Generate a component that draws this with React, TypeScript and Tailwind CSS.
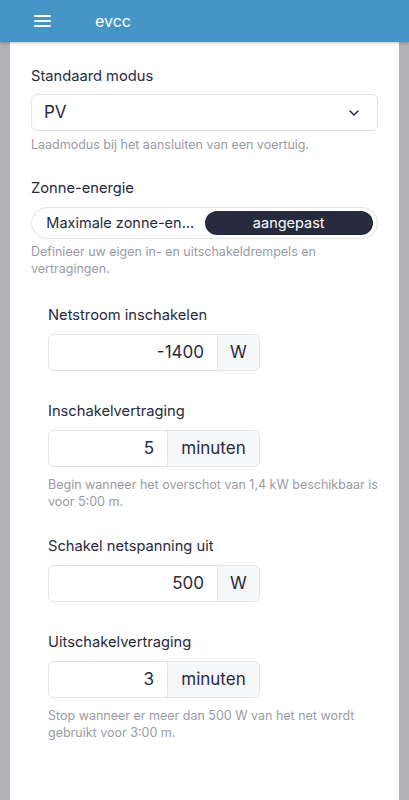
import { ChevronDown } from "lucide-react"

const font = { fontFamily: "Inter, 'Noto Sans', sans-serif" }

function Label({ children, className }: { children: React.ReactNode; className?: string }) {
  return <div className={"text-[14.7px] leading-5 text-[#28293e] " + (className ?? "")}>{children}</div>
}

function Help({ children, className }: { children: React.ReactNode; className?: string }) {
  return <p className={"text-[12.5px] leading-[17px] text-[#9a9ba3] " + (className ?? "")}>{children}</p>
}

function UnitInput({ value, unit, wide }: { value: string; unit: string; wide?: boolean }) {
  return (
    <div className="mt-[9px] flex h-[37px] w-[212px] rounded-md border border-[#e3e4e8] text-[17px] text-[#28293e]">
      <div className={wide ? "flex w-[168px] items-center justify-end pr-[13px]" : "flex w-[118px] items-center justify-end pr-[13px]"}>
        {value}
      </div>
      <div className="flex flex-1 items-center justify-center rounded-r-md border-l border-[#e3e4e8] bg-[#f6f7f9]">
        {unit}
      </div>
    </div>
  )
}

export default function App() {
  return (
    <div className="min-h-[800px] bg-[#b1b1b6]" style={font}>
      <header className="relative z-10 flex h-[42px] items-center bg-[#4596c7] shadow-[0_1px_3px_rgba(0,0,0,0.25)]">
        <svg className="ml-[34px]" width="17" height="12" viewBox="0 0 17 12">
          <rect x="0" y="0" width="17" height="2" rx="1" fill="white" />
          <rect x="0" y="5" width="17" height="2" rx="1" fill="white" />
          <rect x="0" y="10" width="17" height="2" rx="1" fill="white" />
        </svg>
        <span className="ml-[44px] text-[16px] text-white">evcc</span>
      </header>

      <main className="mx-[10px] min-h-[758px] bg-white px-[21px] pt-[24px] pb-10">
        <Label>Standaard modus</Label>
        <div className="mt-[8px] flex h-[37px] items-center justify-between rounded-md border border-[#e3e4e8] pl-[12px] pr-[15px] text-[17px] text-[#28293e]">
          <span>PV</span>
          <ChevronDown className="h-4 w-4" strokeWidth={2.2} />
        </div>
        <Help className="mt-[5px]">Laadmodus bij het aansluiten van een voertuig.</Help>

        <Label className="mt-[25px]">Zonne-energie</Label>
        <div className="mt-[9px] flex h-[32px] items-center rounded-full border border-[#e3e4e8] px-[4px] text-[14.5px]">
          <div className="flex-1 whitespace-nowrap text-center text-[#28293e]">Maximale zonne-en...</div>
          <div className="flex h-[24px] flex-1 items-center justify-center rounded-full bg-[#282a3e] text-white">
            aangepast
          </div>
        </div>
        <Help className="mt-[4px]">Definieer uw eigen in- en uitschakeldrempels en vertragingen.</Help>

        <div className="pl-[17px]">
          <Label className="mt-[28px]">Netstroom inschakelen</Label>
          <UnitInput value="-1400" unit="W" wide />

          <Label className="mt-[30px]">Inschakelvertraging</Label>
          <UnitInput value="5" unit="minuten" />
          <Help className="mt-[9px]">Begin wanneer het overschot van 1,4 kW beschikbaar is voor 5:00 m.</Help>

          <Label className="mt-[26px]">Schakel netspanning uit</Label>
          <UnitInput value="500" unit="W" wide />

          <Label className="mt-[30px]">Uitschakelvertraging</Label>
          <UnitInput value="3" unit="minuten" />
          <Help className="mt-[9px]">Stop wanneer er meer dan 500 W van het net wordt gebruikt voor 3:00 m.</Help>
        </div>
      </main>
    </div>
  )
}
